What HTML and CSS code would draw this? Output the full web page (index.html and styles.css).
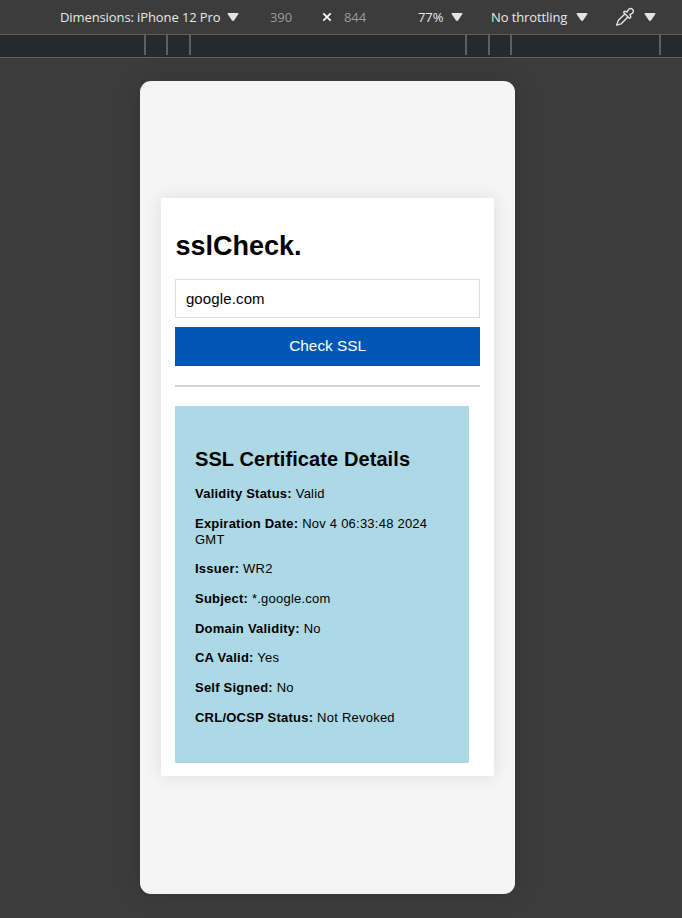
FILE: index.html
```html
<!DOCTYPE html>
<html lang="en">
<head>
<meta charset="utf-8">
<title>sslCheck.</title>
<link rel="stylesheet" href="styles.css">
</head>
<body>
<header class="toolbar">
  <span class="label device-name">Dimensions: iPhone 12 Pro</span>
  <svg class="arrow" viewBox="0 0 12 10"><path d="M1.6 1h8.8q1.5 0 .8 1.2L7.2 8.3Q6 9.8 4.8 8.3L.8 2.2Q.1 1 1.6 1z"/></svg>
  <span class="label size width">390</span>
  <svg class="times" viewBox="0 0 10 10"><path d="M1.3 1.3l7.4 7.4M8.7 1.3L1.3 8.7"/></svg>
  <span class="label size height">844</span>
  <span class="label zoom">77%</span>
  <svg class="arrow" viewBox="0 0 12 10"><path d="M1.6 1h8.8q1.5 0 .8 1.2L7.2 8.3Q6 9.8 4.8 8.3L.8 2.2Q.1 1 1.6 1z"/></svg>
  <span class="label throttle">No throttling</span>
  <svg class="arrow" viewBox="0 0 12 10"><path d="M1.6 1h8.8q1.5 0 .8 1.2L7.2 8.3Q6 9.8 4.8 8.3L.8 2.2Q.1 1 1.6 1z"/></svg>
  <svg class="picker" viewBox="0 0 20 20"><path d="M9.8 7L3.2 13.6Q2.6 16 1.5 18.2Q4.2 17.4 6.2 16.8L13 10M8.6 5.6Q9 4 10.5 4.4L12.2 5L13.2 2.9Q15.3.4 17.4 2.2Q19.5 4.3 17.2 6.4L15 7.7L15.7 9.4Q16 11 14.3 11.3Z"/></svg>
  <svg class="arrow" viewBox="0 0 12 10"><path d="M1.6 1h8.8q1.5 0 .8 1.2L7.2 8.3Q6 9.8 4.8 8.3L.8 2.2Q.1 1 1.6 1z"/></svg>
</header>
<div class="ruler"><i></i><i></i><i></i><i></i><i></i><i></i><i></i></div>
<main class="device">
  <section class="card">
    <h1>sslCheck.</h1>
    <input class="domain" type="text" value="google.com" aria-label="Domain">
    <button class="check" type="button">Check SSL</button>
    <hr>
    <div class="details">
      <h2>SSL Certificate Details</h2>
      <p><strong>Validity Status:</strong> Valid</p>
      <p><strong>Expiration Date:</strong> Nov 4 06:33:48 2024 GMT</p>
      <p><strong>Issuer:</strong> WR2</p>
      <p><strong>Subject:</strong> *.google.com</p>
      <p><strong>Domain Validity:</strong> No</p>
      <p><strong>CA Valid:</strong> Yes</p>
      <p><strong>Self Signed:</strong> No</p>
      <p><strong>CRL/OCSP Status:</strong> Not Revoked</p>
    </div>
  </section>
</main>
</body>
</html>
```
FILE: styles.css
```css
* { box-sizing: border-box; }
body {
  margin: 0;
  height: 918px;
  overflow: hidden;
  background: #3c3c3c;
  font-family: "Liberation Sans", Arial, sans-serif;
  color: #000;
}
.toolbar {
  display: flex;
  align-items: center;
  height: 34px;
  padding-left: 60px;
  font: 13px/34px "Open Sans", "Noto Sans", sans-serif;
  color: #e8e8e8;
}
.toolbar > * { flex: none; }
.label { white-space: nowrap; letter-spacing: -0.1px; }
.device-name { width: 167px; }
.arrow { width: 12px; height: 10px; fill: #e3e3e3; }
.size { color: #9b9b9b; }
.width { width: 52px; margin-left: 31px; }
.times { width: 10px; height: 10px; fill: none; stroke: #fff; stroke-width: 1.7; }
.height { width: 74px; margin-left: 12px; }
.zoom { width: 33px; }
.throttle { width: 85px; margin-left: 28px; }
.picker {
  width: 20px;
  height: 20px;
  margin: 0 9px 0 27px;
  fill: none;
  stroke: #e3e3e3;
  stroke-width: 1.4;
  stroke-linejoin: round;
}
.ruler {
  display: grid;
  grid-template-columns: 146px 22px 23px 276px 23px 22px 149px;
  height: 24px;
  border: solid #5e5f61;
  border-width: 1px 0;
  background: #28292b;
}
.ruler i { height: 20px; border-right: 2px solid #5e5f61; }
.device {
  width: 375px;
  height: 813px;
  margin: 23px 0 0 140px;
  padding: 117px 21px 0 21.4px;
  border-radius: 11px;
  background: #f5f5f5;
  box-shadow: 0 0 28px rgba(0, 0, 0, 0.14);
}
.card {
  height: 578px;
  padding: 33px 14px 0 14px;
  background: #fff;
  box-shadow: 0 0 16px rgba(0, 0, 0, 0.1);
}
h1 { margin: 0 0 17px; font-size: 27px; line-height: 31px; }
.domain {
  display: block;
  width: 100%;
  height: 39px;
  padding: 0 10px 1px 9.5px;
  border: 1px solid #dedede;
  border-radius: 0;
  outline: 0;
  background: #fff;
  font: 15px "Liberation Sans", Arial, sans-serif;
  letter-spacing: 0.13px;
}
.check {
  display: block;
  width: 100%;
  height: 39px;
  margin-top: 9px;
  padding: 0 0 2px;
  border: 0;
  background: #0056b3;
  color: #fff;
  font: 15.4px "Liberation Sans", Arial, sans-serif;
}
hr { height: 2px; margin: 19px 0; border: 0; background: #d3d3d3; }
.details {
  width: 293.5px;
  height: 357px;
  padding: 41px 19.6px 0;
  background: #add8e6;
}
h2 { margin: 0 0 14px; font-size: 20px; line-height: 25px; letter-spacing: 0.09px; white-space: nowrap; }
p { margin: 0 0 13.7px; font-size: 13px; line-height: 16px; letter-spacing: 0.23px; }
```
